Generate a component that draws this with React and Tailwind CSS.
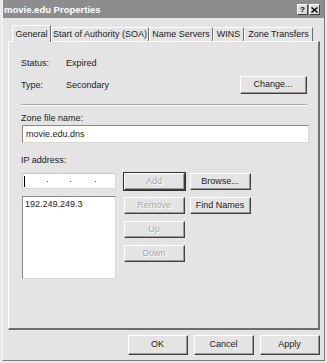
import React from "react";

const font = { fontFamily: '"Liberation Sans", Arial, sans-serif' };

function Btn({ children, w = "w-[61px]", h = "h-[17px]", disabled, isDefault }) {
  return (
    <div
      className={`${w} ${h} shrink-0 box-border border border-t-white border-l-white border-r-[#404040] border-b-[#404040] bg-[#e4e4e4] flex items-center justify-center ${
        isDefault ? "outline outline-1 outline-[#303030]" : ""
      }`}
    >
      <div className="w-full h-full border-r border-b border-[#9a9a9a] flex items-center justify-center">
        <span
          className={
            disabled
              ? "text-[#a8a8a8] [text-shadow:1px_1px_0_#ffffff]"
              : "text-[#222222]"
          }
        >
          {children}
        </span>
      </div>
    </div>
  );
}

function Tab({ label, w, selected }) {
  if (selected) {
    return (
      <div
        className={`${w} h-[17px] -mb-[1px] box-border border-t border-l border-white border-r border-r-[#6e6e6e] bg-[#e4e4e4] flex items-center justify-center relative z-10 rounded-tl-[1px]`}
      >
        <span>{label}</span>
      </div>
    );
  }
  return (
    <div
      className={`${w} h-[14px] box-border border-t border-l border-white border-r border-r-[#6e6e6e] flex items-center justify-center`}
    >
      <span>{label}</span>
    </div>
  );
}

export default function App() {
  return (
    <div
      className="w-[327px] h-[363px] bg-[#e9e9e9] text-[9px] leading-[11px] text-[#222222] overflow-hidden"
      style={font}
    >
      <div className="ml-[2px] w-[323px] h-[361px] box-border border-l border-l-[#f5f5f5] border-r border-r-[#7a7a7a] border-b border-b-[#7a7a7a] bg-[#e4e4e4] flex flex-col">
        {/* Title bar */}
        <div className="h-[18px] bg-[#8d8d8d] flex items-center justify-between pl-[1px] pr-[4px]">
          <span className="text-white font-bold text-[9.5px]">movie.edu Properties</span>
          <div className="flex gap-[1px] mt-[1px]">
            <div className="w-[11px] h-[11px] bg-[#dcdcdc] border border-t-white border-l-white border-r-[#404040] border-b-[#404040] flex items-center justify-center text-[8px] font-bold leading-none text-black">
              ?
            </div>
            <div className="w-[11px] h-[11px] bg-[#dcdcdc] border border-t-white border-l-white border-r-[#404040] border-b-[#404040] flex items-center justify-center">
              <svg width="7" height="6" viewBox="0 0 7 6">
                <path d="M0.5 0.5 L6.5 5.5 M6.5 0.5 L0.5 5.5" stroke="#000" strokeWidth="1.4" />
              </svg>
            </div>
          </div>
        </div>

        {/* Tabs */}
        <div className="mt-[8px] ml-[9px] flex items-end h-[15px]">
          <Tab label="General" w="w-[39px]" selected />
          <Tab label="Start of Authority (SOA)" w="w-[98px]" />
          <Tab label="Name Servers" w="w-[64px]" />
          <Tab label="WINS" w="w-[31px]" />
          <Tab label="Zone Transfers" w="w-[69px]" />
        </div>

        {/* Panel */}
        <div className="ml-[5px] w-[312px] h-[289px] box-border border-t border-l border-white border-r-2 border-r-[#6e6e6e] border-b-2 border-b-[#6e6e6e] pl-[12px] pr-[11px] flex flex-col">
          <div className="mt-[15px] flex items-center h-[12px]">
            <span className="w-[45px]">Status:</span>
            <span>Expired</span>
          </div>
          <div className="mt-[7px] flex items-center justify-between h-[18px]">
            <div className="flex items-center">
              <span className="w-[45px]">Type:</span>
              <span>Secondary</span>
            </div>
            <Btn w="w-[67px]" h="h-[18px]">Change...</Btn>
          </div>
          <div className="mt-[10px] h-[2px] border-t border-t-[#a8a8a8] border-b border-b-white" />
          <div className="mt-[6px] h-[12px] flex items-center">Zone file name:</div>
          <div className="mt-[1px] h-[18px] w-[287px] ml-[1px] box-border bg-white border border-t-[#8a8a8a] border-l-[#8a8a8a] border-r-[#d8d8d8] border-b-[#d8d8d8] flex items-center pl-[3px]">
            movie.edu.dns
          </div>
          <div className="mt-[11px] h-[12px] flex items-center">IP address:</div>

          <div className="mt-[7px] ml-[1px] flex gap-[8px]">
            <div className="flex flex-col gap-[7px] w-[94px]">
              <div className="h-[16px] box-border bg-white border border-t-[#c8c8c8] border-l-[#c8c8c8] border-r-[#d8d8d8] border-b-[#d8d8d8] relative">
                <div className="absolute left-[1px] top-[2px] w-[1px] h-[11px] bg-black" />
                <div className="absolute left-[24px] top-[7px] w-[1px] h-[1px] bg-[#555555]" />
                <div className="absolute left-[47px] top-[7px] w-[1px] h-[1px] bg-[#555555]" />
                <div className="absolute left-[72px] top-[7px] w-[1px] h-[1px] bg-[#555555]" />
              </div>
              <div className="h-[83px] box-border bg-white border border-t-[#8a8a8a] border-l-[#8a8a8a] border-r-[#d8d8d8] border-b-[#d8d8d8] pl-[2px] pt-[2px]">
                192.249.249.3
              </div>
            </div>
            <div className="flex flex-col gap-[7px]">
              <Btn disabled isDefault>Add</Btn>
              <Btn disabled>Remove</Btn>
              <Btn disabled>Up</Btn>
              <Btn disabled>Down</Btn>
            </div>
            <div className="flex flex-col gap-[7px] -ml-[3px]">
              <Btn>Browse...</Btn>
              <Btn>Find Names</Btn>
            </div>
          </div>
        </div>

        {/* Bottom buttons */}
        <div className="mt-[5px] ml-[125px] flex gap-[6px]">
          <Btn w="w-[60px]" h="h-[20px]">OK</Btn>
          <Btn w="w-[60px]" h="h-[20px]">Cancel</Btn>
          <Btn w="w-[60px]" h="h-[20px]">Apply</Btn>
        </div>
      </div>
    </div>
  );
}
